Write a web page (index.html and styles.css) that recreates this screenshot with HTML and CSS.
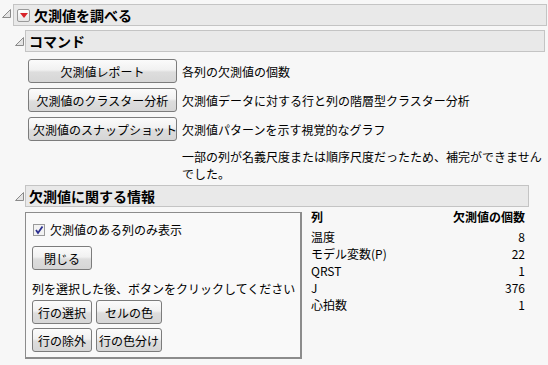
FILE: index.html
```html
<!DOCTYPE html>
<html lang="ja">
<head>
    <meta charset="UTF-8">
    <title>欠測値を調べる</title>
    <link rel="stylesheet" href="styles.css">
</head>
<body>
    <div class="node top-node">
        <span class="toggle">
            <svg width="9" height="9" viewBox="0 0 9 9"><polygon points="8.5,0.5 8.5,8.5 0.5,8.5" fill="#e4e4e4" stroke="#8a8a8a" stroke-width="1"/></svg>
        </span>
        <div class="node-body">
            <div class="title-bar main-title">
                <span class="menu-icon">
                    <svg width="8" height="5" viewBox="0 0 8 5"><polygon points="0,0 8,0 4,5" fill="#d8232a"/></svg>
                </span>
                欠測値を調べる
            </div>

            <div class="node">
                <span class="toggle">
                    <svg width="9" height="9" viewBox="0 0 9 9"><polygon points="8.5,0.5 8.5,8.5 0.5,8.5" fill="#e4e4e4" stroke="#8a8a8a" stroke-width="1"/></svg>
                </span>
                <div class="node-body">
                    <div class="title-bar">コマンド</div>
                    <div class="commands">
                        <div class="cmd-row">
                            <button class="btn cmd-btn">欠測値レポート</button>
                            <span>各列の欠測値の個数</span>
                        </div>
                        <div class="cmd-row">
                            <button class="btn cmd-btn">欠測値のクラスター分析</button>
                            <span>欠測値データに対する行と列の階層型クラスター分析</span>
                        </div>
                        <div class="cmd-row">
                            <button class="btn cmd-btn">欠測値のスナップショット</button>
                            <span>欠測値パターンを示す視覚的なグラフ</span>
                        </div>
                    </div>
                    <p class="note">一部の列が名義尺度または順序尺度だったため、補完ができませんでした。</p>
                </div>
            </div>

            <div class="node">
                <span class="toggle">
                    <svg width="9" height="9" viewBox="0 0 9 9"><polygon points="8.5,0.5 8.5,8.5 0.5,8.5" fill="#e4e4e4" stroke="#8a8a8a" stroke-width="1"/></svg>
                </span>
                <div class="node-body info-body">
                    <div class="title-bar">欠測値に関する情報</div>
                    <div class="info">
                        <div class="panel">
                            <label class="check-row">
                                <span class="checkbox">
                                    <svg width="10" height="10" viewBox="0 0 10 10"><path d="M2 5 L4 8 L8.5 1.5" fill="none" stroke="#2b2f8f" stroke-width="1.8"/></svg>
                                </span>
                                欠測値のある列のみ表示
                            </label>
                            <button class="btn small-btn">閉じる</button>
                            <p class="hint">列を選択した後、ボタンをクリックしてください</p>
                            <div class="btn-grid">
                                <button class="btn small-btn">行の選択</button>
                                <button class="btn small-btn">セルの色</button>
                                <button class="btn small-btn">行の除外</button>
                                <button class="btn small-btn">行の色分け</button>
                            </div>
                        </div>
                        <table class="counts">
                            <thead>
                                <tr><th class="col-name">列</th><th class="col-num">欠測値の個数</th></tr>
                            </thead>
                            <tbody>
                                <tr><td>温度</td><td class="num">8</td></tr>
                                <tr><td>モデル変数(P)</td><td class="num">22</td></tr>
                                <tr><td>QRST</td><td class="num">1</td></tr>
                                <tr><td>J</td><td class="num">376</td></tr>
                                <tr><td>心拍数</td><td class="num">1</td></tr>
                            </tbody>
                        </table>
                    </div>
                </div>
            </div>
        </div>
    </div>
</body>
</html>
```

FILE: styles.css
```css
body {
    margin: 0;
    padding: 4px 0 0 0;
    background-color: #f7f7f7;
    font-family: "Noto Sans CJK JP", "Noto Sans", sans-serif;
    font-size: 12px;
    color: #000;
}

.node {
    display: flex;
    align-items: flex-start;
}

.toggle {
    width: 12px;
    flex: none;
    display: flex;
    justify-content: center;
    padding-top: 7px;
}

.top-node > .toggle {
    width: 13px;
    justify-content: flex-start;
    padding-left: 2px;
    box-sizing: border-box;
    padding-top: 5px;
}

.node-body {
    flex: 1;
    margin-right: 1px;
}

.node .node .node-body {
    margin-right: 2px;
}

.title-bar {
    height: 20px;
    display: flex;
    align-items: center;
    padding-left: 3px;
    background-color: #e9e9e9;
    border: 1px solid #c4c4c4;
    font-size: 14px;
    font-weight: bold;
    line-height: 20px;
}

.main-title {
    padding-left: 3px;
    margin-bottom: 4px;
}

.menu-icon {
    width: 11px;
    height: 11px;
    margin-right: 4px;
    border: 1px solid #9a9a9a;
    border-radius: 2px;
    background: linear-gradient(#ffffff, #e6e6e6);
    display: flex;
    justify-content: center;
    align-items: center;
}

.commands {
    display: flex;
    flex-direction: column;
    gap: 5px;
    padding: 7px 0 0 3px;
}

.cmd-row {
    display: flex;
    align-items: center;
    gap: 5px;
}

.btn {
    font-family: inherit;
    font-size: 12px;
    color: #000;
    height: 24px;
    padding: 0 4px;
    border: 1px solid #7c7c7c;
    border-radius: 3px;
    background: linear-gradient(#fbfbfb, #f1f1f1 45%, #dddddd 55%, #d6d6d6);
    cursor: pointer;
}

.cmd-btn {
    width: 149px;
    white-space: nowrap;
}

.note {
    margin: 7px 0 0 157px;
    line-height: 17px;
}

.node + .node {
    margin-top: 3px;
}

.info-body {
    flex: none;
    width: 504px;
}

.info {
    display: flex;
    align-items: flex-start;
    gap: 9px;
    margin-top: 5px;
}

.panel {
    width: 268px;
    height: 136px;
    padding: 8px 0 0 6px;
    background-color: #f9f9f9;
    border: 1px solid #8c8c8c;
    border-right-width: 2px;
    border-bottom-width: 2px;
}

.check-row {
    display: flex;
    align-items: center;
    gap: 5px;
    padding-left: 1px;
    height: 17px;
}

.checkbox {
    width: 10px;
    height: 10px;
    border: 1px solid #9a9a9a;
    background: #f2f2f2;
    display: flex;
}

.small-btn {
    width: 60px;
    padding: 0;
    white-space: nowrap;
}

.panel > .small-btn {
    margin-top: 8px;
}

.hint {
    margin: 10px 0 3px 0;
    line-height: 17px;
}

.btn-grid {
    display: grid;
    grid-template-columns: 60px 66px;
    gap: 4px 4px;
}

.btn-grid .small-btn {
    width: 100%;
}

.counts {
    border-collapse: collapse;
    width: 214px;
    margin-top: -4px;
}

.counts th {
    font-weight: bold;
    padding: 0 0 3px 0;
    line-height: 17px;
}

.counts td {
    padding: 0;
    line-height: 17px;
}

.col-name {
    text-align: left;
}

.col-num, .num {
    text-align: right;
}
```
